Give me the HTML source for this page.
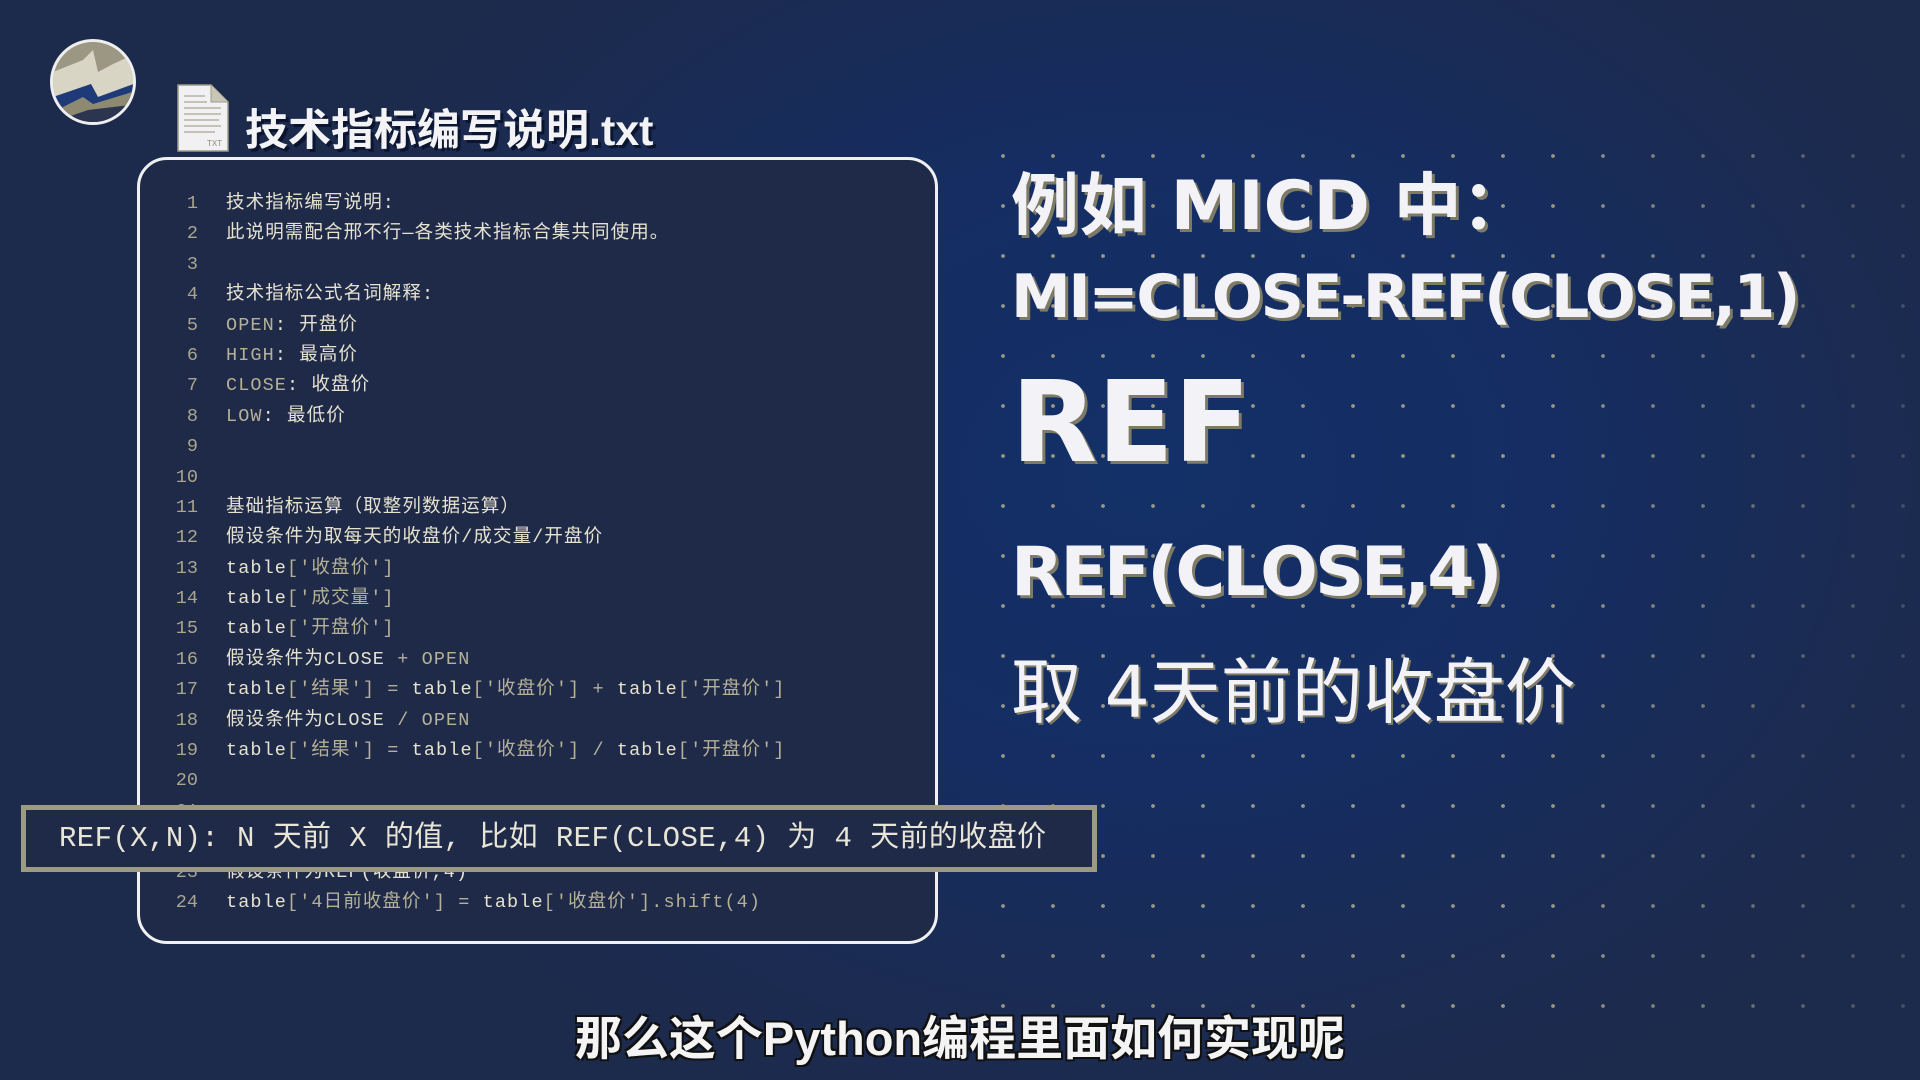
<!DOCTYPE html>
<html><head><meta charset="utf-8"><style>
*{margin:0;padding:0;box-sizing:border-box}
body{width:1920px;height:1080px;overflow:hidden;position:relative;
background:radial-gradient(ellipse 900px 700px at 1150px 470px,#133068 0%,#152d62 45%,#1b2b52 80%,#1c2a4c 100%);
font-family:"Liberation Sans","Noto Sans CJK SC",sans-serif;}
.dots{position:absolute;left:978px;top:131px;width:942px;height:890px;
background-image:radial-gradient(circle,#a9a58c 1.6px,transparent 2.2px);background-size:50px 50px;opacity:.9;
-webkit-mask-image:linear-gradient(90deg,#000 60%,rgba(0,0,0,.3) 100%)}
.logo{position:absolute;left:50px;top:39px;width:86px;height:86px;border-radius:50%;border:3px solid #eee;overflow:hidden;background:#9b9782}
.file{position:absolute;left:177px;top:84px}
.title{position:absolute;left:245px;top:96px;font-size:43px;font-weight:bold;color:#f3f3f5;text-shadow:3px 3px 0 #0b1530;font-family:"Liberation Sans","Noto Sans CJK SC",sans-serif}
.panel{position:absolute;left:137px;top:157px;width:801px;height:787px;border:3px solid #f0f0f0;border-radius:30px;background:#1e2a47}
.code{position:absolute;left:0;top:29px;font-family:"Liberation Mono","Noto Sans CJK SC",monospace;font-size:18.5px;letter-spacing:1.1px;color:#e6e2d0}
.ln{display:flex;height:30.4px;line-height:30.4px;white-space:pre}
.ln b{font-weight:normal;width:58px;text-align:right;color:#a9a58e;margin-right:28px;letter-spacing:0}
.k{color:#b5b098}
.overlay{position:absolute;left:21px;top:805px;width:1076px;height:67px;border:5px solid #9d9a84;background:#1e2a47;color:#e8e5d6;font-family:"Liberation Mono","Noto Sans CJK SC",monospace;font-size:29px;letter-spacing:0.4px;line-height:57px;padding-left:33px;white-space:pre}
.r{position:absolute;left:1011px;color:#f3f3f7;font-weight:bold;text-shadow:3px 3px 0 #7d7a66;white-space:nowrap;font-family:"DejaVu Sans","Noto Sans CJK SC",sans-serif}
.sub{position:absolute;left:0;width:1920px;text-align:center;top:1000px;font-size:47px;font-weight:bold;color:#f4f4f4;text-shadow:2px 2px 0 #111,-2px -2px 0 #111,2px -2px 0 #111,-2px 2px 0 #111}
</style></head><body>
<div class="dots"></div>
<div class="logo"><svg width="86" height="86" viewBox="0 0 86 86"><path d="M0 30 L30 18 L40 8 L45 30 L60 22 L86 10 L86 40 L60 50 L45 55 L38 42 L0 55Z" fill="#d8d5c5"/><path d="M0 55 L38 42 L45 55 L86 40 L86 86 L0 86Z" fill="#1f3a78"/><path d="M0 70 L30 55 L40 62 L86 48 L86 86 L0 86Z" fill="#8e8a72"/><path d="M0 80 L35 68 L86 62 L86 86 L0 86Z" fill="#2c3550"/></svg></div>
<svg class="file" width="52" height="68" viewBox="0 0 52 68"><path d="M1 1 H34 L51 18 V67 H1Z" fill="#f1f1f4" stroke="#9e9a86" stroke-width="1.5"/><path d="M34 1 V18 H51" fill="#c9c6b6" stroke="#9e9a86"/><g stroke="#a9a590" stroke-width="1.2"><line x1="7" y1="12" x2="28" y2="12"/><line x1="7" y1="18" x2="30" y2="18"/><line x1="7" y1="24" x2="44" y2="24"/><line x1="7" y1="30" x2="44" y2="30"/><line x1="7" y1="36" x2="42" y2="36"/><line x1="7" y1="42" x2="44" y2="42"/><line x1="7" y1="48" x2="38" y2="48"/></g><text x="30" y="62" font-size="8" fill="#8e8a76" font-family="Liberation Sans">TXT</text></svg>
<div class="title">技术指标编写说明.txt</div>
<div class="panel"><div class="code">
<div class="ln"><b>1</b>技术指标编写说明:</div>
<div class="ln"><b>2</b>此说明需配合邢不行—各类技术指标合集共同使用。</div>
<div class="ln"><b>3</b></div>
<div class="ln"><b>4</b>技术指标公式名词解释:</div>
<div class="ln"><b>5</b><span class="k">OPEN</span>: 开盘价</div>
<div class="ln"><b>6</b><span class="k">HIGH</span>: 最高价</div>
<div class="ln"><b>7</b><span class="k">CLOSE</span>: 收盘价</div>
<div class="ln"><b>8</b><span class="k">LOW</span>: 最低价</div>
<div class="ln"><b>9</b></div>
<div class="ln"><b>10</b></div>
<div class="ln"><b>11</b>基础指标运算（取整列数据运算）</div>
<div class="ln"><b>12</b>假设条件为取每天的收盘价/成交量/开盘价</div>
<div class="ln"><b>13</b>table<span class="k">['收盘价']</span></div>
<div class="ln"><b>14</b>table<span class="k">['成交量']</span></div>
<div class="ln"><b>15</b>table<span class="k">['开盘价']</span></div>
<div class="ln"><b>16</b>假设条件为CLOSE <span class="k">+ OPEN</span></div>
<div class="ln"><b>17</b>table<span class="k">['结果'] = </span>table<span class="k">['收盘价'] + </span>table<span class="k">['开盘价']</span></div>
<div class="ln"><b>18</b>假设条件为CLOSE <span class="k">/ OPEN</span></div>
<div class="ln"><b>19</b>table<span class="k">['结果'] = </span>table<span class="k">['收盘价'] / </span>table<span class="k">['开盘价']</span></div>
<div class="ln"><b>20</b></div>
<div class="ln"><b>21</b></div>
<div class="ln"><b>22</b></div>
<div class="ln"><b>23</b>假设条件为REF(收盘价,4)</div>
<div class="ln"><b>24</b>table<span class="k">['4日前收盘价'] = </span>table<span class="k">['收盘价'].shift(4)</span></div>
</div></div>
<div class="overlay">REF(X,N): N 天前 X 的值, 比如 REF(CLOSE,4) 为 4 天前的收盘价</div>
<div class="r" style="top:150px;font-size:68px">例如 MICD 中：</div>
<div class="r" style="top:262px;font-size:60px;letter-spacing:-2.3px">MI=CLOSE-REF(CLOSE,1)</div>
<div class="r" style="top:358px;font-size:112px">REF</div>
<div class="r" style="top:533px;font-size:68px;letter-spacing:-3px">REF(CLOSE,4)</div>
<div class="r" style="top:636px;font-size:71px;font-weight:normal;text-shadow:2px 2px 0 #7d7a66">取 4天前的收盘价</div>
<div class="sub">那么这个Python编程里面如何实现呢</div>
</body></html>
